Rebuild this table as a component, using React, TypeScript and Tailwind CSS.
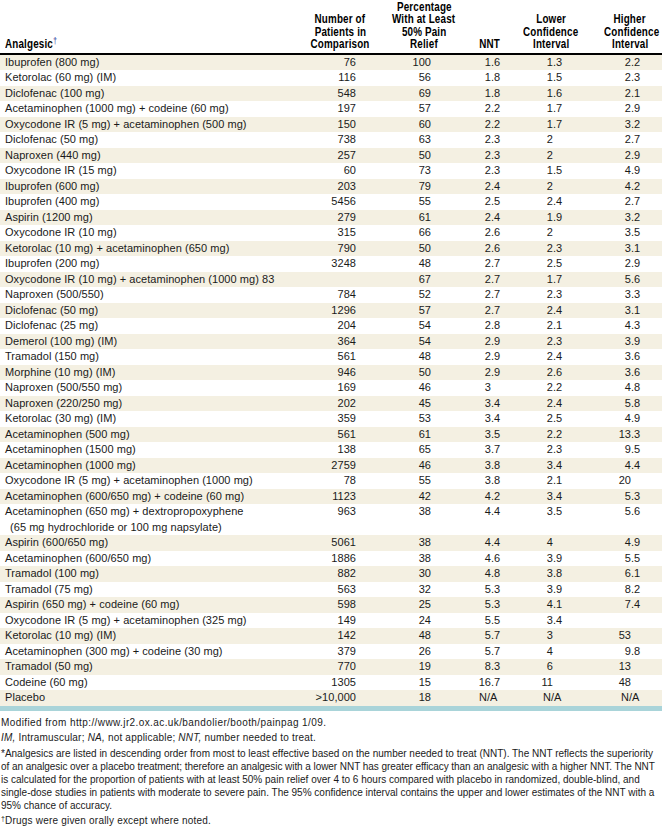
const rows: [string, string, string, string, string, string][] = [
  ['Ibuprofen (800 mg)', '76', '100', '1.6', '1.3', '2.2'],
  ['Ketorolac (60 mg) (IM)', '116', '56', '1.8', '1.5', '2.3'],
  ['Diclofenac (100 mg)', '548', '69', '1.8', '1.6', '2.1'],
  ['Acetaminophen (1000 mg) + codeine (60 mg)', '197', '57', '2.2', '1.7', '2.9'],
  ['Oxycodone IR (5 mg) + acetaminophen (500 mg)', '150', '60', '2.2', '1.7', '3.2'],
  ['Diclofenac (50 mg)', '738', '63', '2.3', '2', '2.7'],
  ['Naproxen (440 mg)', '257', '50', '2.3', '2', '2.9'],
  ['Oxycodone IR (15 mg)', '60', '73', '2.3', '1.5', '4.9'],
  ['Ibuprofen (600 mg)', '203', '79', '2.4', '2', '4.2'],
  ['Ibuprofen (400 mg)', '5456', '55', '2.5', '2.4', '2.7'],
  ['Aspirin (1200 mg)', '279', '61', '2.4', '1.9', '3.2'],
  ['Oxycodone IR (10 mg)', '315', '66', '2.6', '2', '3.5'],
  ['Ketorolac (10 mg) + acetaminophen (650 mg)', '790', '50', '2.6', '2.3', '3.1'],
  ['Ibuprofen (200 mg)', '3248', '48', '2.7', '2.5', '2.9'],
  ['Oxycodone IR (10 mg) + acetaminophen (1000 mg) 83', '', '67', '2.7', '1.7', '5.6'],
  ['Naproxen (500/550)', '784', '52', '2.7', '2.3', '3.3'],
  ['Diclofenac (50 mg)', '1296', '57', '2.7', '2.4', '3.1'],
  ['Diclofenac (25 mg)', '204', '54', '2.8', '2.1', '4.3'],
  ['Demerol (100 mg) (IM)', '364', '54', '2.9', '2.3', '3.9'],
  ['Tramadol (150 mg)', '561', '48', '2.9', '2.4', '3.6'],
  ['Morphine (10 mg) (IM)', '946', '50', '2.9', '2.6', '3.6'],
  ['Naproxen (500/550 mg)', '169', '46', '3', '2.2', '4.8'],
  ['Naproxen (220/250 mg)', '202', '45', '3.4', '2.4', '5.8'],
  ['Ketorolac (30 mg) (IM)', '359', '53', '3.4', '2.5', '4.9'],
  ['Acetaminophen (500 mg)', '561', '61', '3.5', '2.2', '13.3'],
  ['Acetaminophen (1500 mg)', '138', '65', '3.7', '2.3', '9.5'],
  ['Acetaminophen (1000 mg)', '2759', '46', '3.8', '3.4', '4.4'],
  ['Oxycodone IR (5 mg) + acetaminophen (1000 mg)', '78', '55', '3.8', '2.1', '20'],
  ['Acetaminophen (600/650 mg) + codeine (60 mg)', '1123', '42', '4.2', '3.4', '5.3'],
  ['Acetaminophen (650 mg) + dextropropoxyphene|(65 mg hydrochloride or 100 mg napsylate)', '963', '38', '4.4', '3.5', '5.6'],
  ['Aspirin (600/650 mg)', '5061', '38', '4.4', '4', '4.9'],
  ['Acetaminophen (600/650 mg)', '1886', '38', '4.6', '3.9', '5.5'],
  ['Tramadol (100 mg)', '882', '30', '4.8', '3.8', '6.1'],
  ['Tramadol (75 mg)', '563', '32', '5.3', '3.9', '8.2'],
  ['Aspirin (650 mg) + codeine (60 mg)', '598', '25', '5.3', '4.1', '7.4'],
  ['Oxycodone IR (5 mg) + acetaminophen (325 mg)', '149', '24', '5.5', '3.4', ''],
  ['Ketorolac (10 mg) (IM)', '142', '48', '5.7', '3', '53'],
  ['Acetaminophen (300 mg) + codeine (30 mg)', '379', '26', '5.7', '4', '9.8'],
  ['Tramadol (50 mg)', '770', '19', '8.3', '6', '13'],
  ['Codeine (60 mg)', '1305', '15', '16.7', '11', '48'],
  ['Placebo', '>10,000', '18', 'N/A', 'N/A', 'N/A'],
];

const cols = 'grid grid-cols-[300px_80px_88px_44px_78px_72px]';

// decimal-aligned cell: integer part in a fixed right-aligned box
function Dec({ v, intW, naPad }: { v: string; intW: string; naPad: string }) {
  if (v === 'N/A') return <div className={naPad}>N/A</div>;
  const [i, f] = v.split('.');
  return (
    <div className="flex">
      <span className={`${intW} text-right`}>{i}</span>
      {f !== undefined && <span>.{f}</span>}
    </div>
  );
}

function Row({ r, shaded }: { r: (typeof rows)[number]; shaded: boolean }) {
  const [name, n, pct, nnt, lo, hi] = r;
  const parts = name.split('|');
  return (
    <div
      className={`${cols} items-start ${parts.length > 1 ? 'h-[31px]' : 'h-[15.5px]'} ${
        shaded ? 'bg-[#f4f0e2]' : 'bg-white'
      }`}
    >
      <div className="pl-[5px]">
        <div className="whitespace-nowrap">{parts[0]}</div>
        {parts[1] && <div className="whitespace-nowrap pl-[5px]">{parts[1]}</div>}
      </div>
      <div className="text-right pr-[24px]">{n}</div>
      <div className="text-right pr-[37px]">{pct}</div>
      <Dec v={nnt} intW="w-[23px]" naPad="pl-[11px]" />
      <Dec v={lo} intW="w-[41px]" naPad="pl-[31px]" />
      <Dec v={hi} intW="w-[41px]" naPad="pl-[31px]" />
    </div>
  );
}

// condensed bold heading text (no narrow face installed, so squeeze it)
function Head({ lines, left }: { lines: string[]; left?: boolean }) {
  return (
    <div className={left ? 'pl-[5px]' : 'text-center'}>
      {lines.map((l, i) => (
        <div key={i} className="whitespace-nowrap">
          <span className={`inline-block scale-x-[0.82] ${left ? 'origin-left' : 'origin-center'}`}>
            {l}
            {left && <sup className="text-[9px] text-[#2a3a9a] font-normal">†</sup>}
          </span>
        </div>
      ))}
    </div>
  );
}

export default function App() {
  return (
    <div className="w-[662px] h-[826px] overflow-hidden bg-white text-[#1a1a1a] font-['Liberation_Sans',Arial,sans-serif]">
      {/* header */}
      <div className={`${cols} h-[53px] items-end pb-[2px] text-[12px] leading-[12.6px] font-bold text-black tracking-[0.2px]`}>
        <Head lines={['Analgesic']} left />
        <Head lines={['Number of', 'Patients in', 'Comparison']} />
        <Head lines={['Percentage', 'With at Least', '50% Pain', 'Relief']} />
        <Head lines={['NNT']} />
        <Head lines={['Lower', 'Confidence', 'Interval']} />
        <div className="pl-[8px]">
          <Head lines={['Higher', 'Confidence', 'Interval']} />
        </div>
      </div>
      <div className="h-[1.5px] bg-black" />

      {/* body */}
      <div className="text-[11px] leading-[15.5px] tracking-[0.05px]">
        {rows.map((r, idx) => (
          <Row key={idx} r={r} shaded={idx % 2 === 0} />
        ))}
      </div>
      <div className="h-[5px] bg-[#a9d4d9]" />

      {/* footnotes */}
      <div className="pl-[1px] text-[10px] leading-[13px]">
        <p className="mt-[5.5px] tracking-[0.4px]">Modified from http://www.jr2.ox.ac.uk/bandolier/booth/painpag 1/09.</p>
        <p className="mt-[2px] tracking-[0.2px]">
          <i>IM,</i> Intramuscular; <i>NA,</i> not applicable; <i>NNT,</i> number needed to treat.
        </p>
        <p className="mt-[3px] whitespace-nowrap">
          <span className="block">
            *Analgesics are listed in descending order from most to least effective based on the number needed to treat (NNT). The NNT reflects the superiority
          </span>
          <span className="block tracking-[-0.06px]">
            of an analgesic over a placebo treatment; therefore an analgesic with a lower NNT has greater efficacy than an analgesic with a higher NNT. The NNT
          </span>
          <span className="block">
            is calculated for the proportion of patients with at least 50% pain relief over 4 to 6 hours compared with placebo in randomized, double-blind, and
          </span>
          <span className="block">
            single-dose studies in patients with moderate to severe pain. The 95% confidence interval contains the upper and lower estimates of the NNT with a
          </span>
          <span className="block">95% chance of accuracy.</span>
        </p>
        <p className="mt-[2px] tracking-[0.2px]">
          <sup className="text-[7px]">†</sup>Drugs were given orally except where noted.
        </p>
      </div>
    </div>
  );
}
